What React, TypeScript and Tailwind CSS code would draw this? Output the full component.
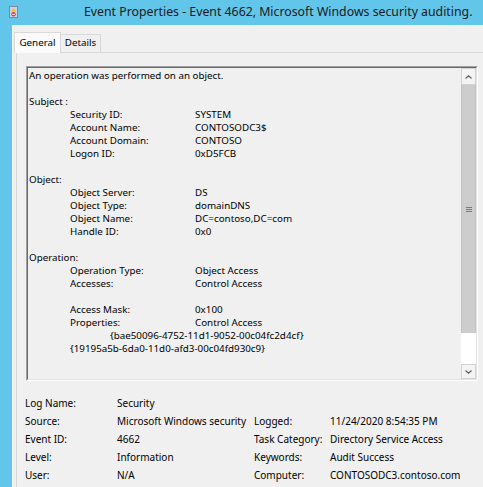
import React from 'react';

const body = [
  { t: 'text', a: 'An operation was performed on an object.' },
  { t: 'blank' },
  { t: 'text', a: 'Subject :' },
  { t: 'kv', a: 'Security ID:', b: 'SYSTEM' },
  { t: 'kv', a: 'Account Name:', b: 'CONTOSODC3$' },
  { t: 'kv', a: 'Account Domain:', b: 'CONTOSO' },
  { t: 'kv', a: 'Logon ID:', b: '0xD5FCB' },
  { t: 'blank' },
  { t: 'text', a: 'Object:' },
  { t: 'kv', a: 'Object Server:', b: 'DS' },
  { t: 'kv', a: 'Object Type:', b: 'domainDNS' },
  { t: 'kv', a: 'Object Name:', b: 'DC=contoso,DC=com' },
  { t: 'kv', a: 'Handle ID:', b: '0x0' },
  { t: 'blank' },
  { t: 'text', a: 'Operation:' },
  { t: 'kv', a: 'Operation Type:', b: 'Object Access' },
  { t: 'kv', a: 'Accesses:', b: 'Control Access' },
  { t: 'blank' },
  { t: 'kv', a: 'Access Mask:', b: '0x100' },
  { t: 'kv', a: 'Properties:', b: 'Control Access' },
  { t: 'deep', a: '{bae50096-4752-11d1-9052-00c04fc2d4cf}' },
  { t: 'sub', a: '{19195a5b-6da0-11d0-afd3-00c04fd930c9}' },
];

const info = [
  ['Log Name:', 'Security', '', ''],
  ['Source:', 'Microsoft Windows security', 'Logged:', '11/24/2020 8:54:35 PM'],
  ['Event ID:', '4662', 'Task Category:', 'Directory Service Access'],
  ['Level:', 'Information', 'Keywords:', 'Audit Success'],
  ['User:', 'N/A', 'Computer:', 'CONTOSODC3.contoso.com'],
];

function EventIcon() {
  return (
    <svg width="9" height="12" viewBox="0 0 9 12">
      <rect x="0.5" y="0.5" width="8" height="11" fill="#c9d3e6" stroke="#7a87a8" />
      <path d="M4.5 1.5 L7 5.5 H2 Z" fill="#f2c02c" />
      <circle cx="4.5" cy="8.3" r="2.2" fill="#e23a3a" />
      <rect x="3" y="7.9" width="3" height="0.9" fill="#fff" />
    </svg>
  );
}

function Arrow({ up }: { up?: boolean }) {
  return (
    <svg width="7" height="4" viewBox="0 0 7 4">
      <path d={up ? 'M0.5 3.5 L3.5 0.8 L6.5 3.5' : 'M0.5 0.5 L3.5 3.2 L6.5 0.5'} fill="none" stroke="#606060" strokeWidth="1.2" />
    </svg>
  );
}

export default function App() {
  return (
    <div className="w-[483px] h-[487px] overflow-hidden bg-[#62c6ea] font-['Noto_Sans',sans-serif] text-black">
      <div className="h-[25px] flex items-center">
        <div className="ml-[9px] mt-[-2px]"><EventIcon /></div>
        <div className="ml-[66px] text-[12.3px] leading-none text-[#1a1a1a] whitespace-nowrap">
          Event Properties - Event 4662, Microsoft Windows security auditing.
        </div>
      </div>
      <div className="ml-[12px] h-[462px] bg-[#f0f0f0] border-l border-[#f8f8f8] pt-[7px] pl-[1px]">
        <div className="flex items-end h-[20px] text-[9.8px]">
          <div className="relative z-10 -mb-px w-[47px] h-[21px] border border-b-0 border-[#d9d9d9] bg-[#fbfbfb] flex items-center justify-center">
            General
          </div>
          <div className="w-[40px] h-[18px] border-t border-r border-[#d9d9d9] bg-[#f0f0f0] flex items-center justify-center">
            Details
          </div>
        </div>
        <div className="ml-[2px] w-[500px] h-[440px] border-t border-l border-[#d9d9d9] bg-[#f0f0f0] pt-[13px] pl-[9px]">
          <div className="w-[452px] h-[315px] flex border-t border-l border-[#a0a0a0] border-b border-r border-b-white border-r-white">
            <div className="flex flex-1 border-t border-l border-[#696969] border-b border-r border-b-[#e3e3e3] border-r-[#e3e3e3]">
              <div className="flex-1 pl-px pt-px text-[9.8px] leading-[13px] whitespace-nowrap">
                {body.map((r, i) => {
                  if (r.t === 'blank') return <div key={i} className="h-[13px]" />;
                  if (r.t === 'text') return <div key={i} className="h-[13px]">{r.a}</div>;
                  if (r.t === 'deep') return <div key={i} className="h-[13px] pl-[81px]">{r.a}</div>;
                  if (r.t === 'sub') return <div key={i} className="h-[13px] pl-[41px]">{r.a}</div>;
                  return (
                    <div key={i} className="h-[13px] flex">
                      <div className="pl-[41px] w-[166px]">{r.a}</div>
                      <div>{r.b}</div>
                    </div>
                  );
                })}
              </div>
              <div className="w-[15px] flex flex-col bg-white">
                <div className="h-[17px] border border-[#d2d2d2] bg-[#f4f4f4] flex items-center justify-center"><Arrow up /></div>
                <div className="h-[248px] bg-[#cdcdcd] border-x border-[#c2c2c2] flex items-center justify-center">
                  <div className="flex flex-col gap-[1px]">
                    <div className="w-[6px] h-px bg-[#7a7a7a]" />
                    <div className="w-[6px] h-px bg-[#7a7a7a]" />
                    <div className="w-[6px] h-px bg-[#7a7a7a]" />
                  </div>
                </div>
                <div className="flex-1" />
                <div className="h-[15px] border border-[#d2d2d2] bg-[#f4f4f4] flex items-center justify-center"><Arrow /></div>
              </div>
            </div>
          </div>
          <div className="mt-[13px] -ml-[1px] text-[10px] leading-[18px] whitespace-nowrap">
            {info.map((r, i) => (
              <div key={i} className="flex h-[18px]">
                <div className="w-[92px]">{r[0]}</div>
                <div className="w-[137px]">{r[1]}</div>
                <div className="w-[76px]">{r[2]}</div>
                <div>{r[3]}</div>
              </div>
            ))}
          </div>
        </div>
      </div>
    </div>
  );
}
